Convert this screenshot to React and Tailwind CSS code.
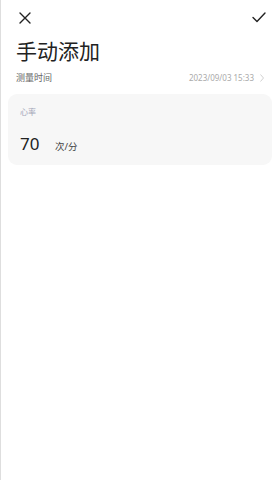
import React from 'react';

const font = { fontFamily: '"Noto Sans", "Noto Sans CJK SC", sans-serif' };

const App = () => {
  return (
    <div
      className="w-[277px] h-[480px] bg-white border-l border-[#dedede] flex flex-col"
      style={font}
    >
      {/* Top bar */}
      <div className="flex items-center justify-between h-[35px] pl-[18px] pr-[11px]">
        <svg width="12" height="12" viewBox="0 0 12 12" fill="none">
          <path d="M1 1L11 11M11 1L1 11" stroke="#222" strokeWidth="1.4" strokeLinecap="round" />
        </svg>
        <svg width="14" height="11" viewBox="0 0 14 11" fill="none">
          <path d="M1 5.5L5 9.5L13 1" stroke="#222" strokeWidth="1.4" strokeLinecap="round" strokeLinejoin="round" />
        </svg>
      </div>

      {/* Title */}
      <div className="pl-[15px] mt-[2px] text-[21px] leading-[28px] text-[#222]">
        手动添加
      </div>

      {/* Measure time row */}
      <div className="flex items-center justify-between pl-[15px] pr-[13px] mt-[6px] h-[14px]">
        <span className="text-[9px] text-[#666]">测量时间</span>
        <div className="flex items-center gap-[6px]">
          <span className="text-[8px] text-[#aaa]">2023/09/03 15:33</span>
          <svg width="4" height="8" viewBox="0 0 4 8" fill="none">
            <path d="M0.5 0.5L3.5 4L0.5 7.5" stroke="#ccc" strokeWidth="0.9" />
          </svg>
        </div>
      </div>

      {/* Heart rate card */}
      <div className="ml-[7px] mt-[9px] w-[264px] h-[71px] rounded-[9px] bg-[#f7f7f7] pl-[12px] pt-[13px]">
        <div className="text-[8px] leading-[10px] text-[#a3a6b8]">心率</div>
        <div className="flex items-baseline mt-[17px]">
          <span className="text-[17px] leading-[20px] text-[#222] w-[35px]">70</span>
          <span className="text-[9.5px] text-[#444]">次/分</span>
        </div>
      </div>
    </div>
  );
};

export default App;
